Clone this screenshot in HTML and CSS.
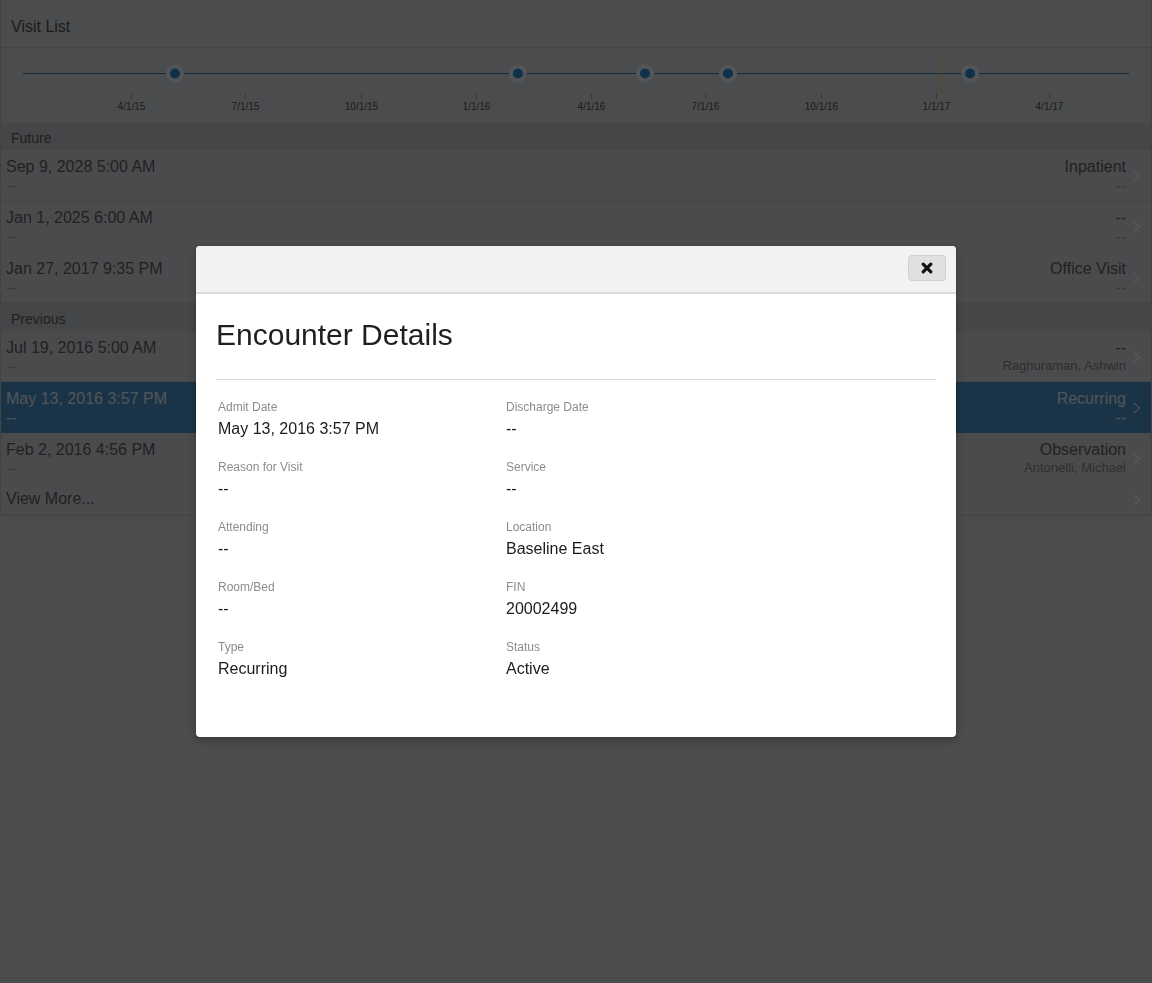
FILE: index.html
```html
<!DOCTYPE html>
<html lang="en">
<head>
<meta charset="utf-8">
<title>Visit List</title>
<link rel="stylesheet" href="styles.css">
</head>
<body>
<div class="panel">
  <div class="panel-header">Visit List</div>
  <div class="timeline">
    <svg class="timeline-svg" width="1150" height="75" viewBox="0 0 1150 75">
      <line class="tl-line" x1="22" y1="25.5" x2="1128" y2="25.5"/>
      <g class="ticks">
        <line x1="130.5" y1="46" x2="130.5" y2="51"/>
        <line x1="244.5" y1="46" x2="244.5" y2="51"/>
        <line x1="360.5" y1="46" x2="360.5" y2="51"/>
        <line x1="475.5" y1="46" x2="475.5" y2="51"/>
        <line x1="590.5" y1="46" x2="590.5" y2="51"/>
        <line x1="704.5" y1="46" x2="704.5" y2="51"/>
        <line x1="820.5" y1="46" x2="820.5" y2="51"/>
        <line x1="935.5" y1="46" x2="935.5" y2="51"/>
        <line x1="1048.5" y1="46" x2="1048.5" y2="51"/>
      </g>
      <g class="tick-labels">
        <text x="130.5" y="62">4/1/15</text>
        <text x="244.5" y="62">7/1/15</text>
        <text x="360.5" y="62">10/1/15</text>
        <text x="475.5" y="62">1/1/16</text>
        <text x="590.5" y="62">4/1/16</text>
        <text x="704.5" y="62">7/1/16</text>
        <text x="820.5" y="62">10/1/16</text>
        <text x="935.5" y="62">1/1/17</text>
        <text x="1048.5" y="62">4/1/17</text>
      </g>
      <line class="today" x1="940.5" y1="4" x2="940.5" y2="45"/>
      <g class="dots">
        <circle class="halo" cx="174" cy="25.5" r="9"/><circle class="dot" cx="174" cy="25.5" r="5"/>
        <circle class="halo" cx="517" cy="25.5" r="9"/><circle class="dot" cx="517" cy="25.5" r="5"/>
        <circle class="halo" cx="644" cy="25.5" r="9"/><circle class="dot" cx="644" cy="25.5" r="5"/>
        <circle class="halo" cx="727" cy="25.5" r="9"/><circle class="dot" cx="727" cy="25.5" r="5"/>
        <circle class="halo" cx="969" cy="25.5" r="9"/><circle class="dot" cx="969" cy="25.5" r="5"/>
      </g>
    </svg>
  </div>

  <div class="section-header">Future</div>
  <div class="row">
    <div class="row-left"><div class="row-title">Sep 9, 2028 5:00 AM</div><div class="row-sub">--</div></div>
    <div class="row-right"><div class="row-title">Inpatient</div><div class="row-sub">--</div></div>
    <svg class="chev" width="8" height="12" viewBox="0 0 8 12"><path d="M1 1 L6.5 6 L1 11"/></svg>
  </div>
  <div class="row">
    <div class="row-left"><div class="row-title">Jan 1, 2025 6:00 AM</div><div class="row-sub">--</div></div>
    <div class="row-right"><div class="row-title">--</div><div class="row-sub">--</div></div>
    <svg class="chev" width="8" height="12" viewBox="0 0 8 12"><path d="M1 1 L6.5 6 L1 11"/></svg>
  </div>
  <div class="row">
    <div class="row-left"><div class="row-title">Jan 27, 2017 9:35 PM</div><div class="row-sub">--</div></div>
    <div class="row-right"><div class="row-title">Office Visit</div><div class="row-sub">--</div></div>
    <svg class="chev" width="8" height="12" viewBox="0 0 8 12"><path d="M1 1 L6.5 6 L1 11"/></svg>
  </div>

  <div class="section-header section-header-prev">Previous</div>
  <div class="row">
    <div class="row-left"><div class="row-title">Jul 19, 2016 5:00 AM</div><div class="row-sub">--</div></div>
    <div class="row-right"><div class="row-title">--</div><div class="row-sub row-person">Raghuraman, Ashwin</div></div>
    <svg class="chev" width="8" height="12" viewBox="0 0 8 12"><path d="M1 1 L6.5 6 L1 11"/></svg>
  </div>
  <div class="row row-selected">
    <div class="row-left"><div class="row-title">May 13, 2016 3:57 PM</div><div class="row-sub">--</div></div>
    <div class="row-right"><div class="row-title">Recurring</div><div class="row-sub">--</div></div>
    <svg class="chev" width="8" height="12" viewBox="0 0 8 12"><path d="M1 1 L6.5 6 L1 11"/></svg>
  </div>
  <div class="row">
    <div class="row-left"><div class="row-title">Feb 2, 2016 4:56 PM</div><div class="row-sub">--</div></div>
    <div class="row-right"><div class="row-title">Observation</div><div class="row-sub row-person">Antonelli, Michael</div></div>
    <svg class="chev" width="8" height="12" viewBox="0 0 8 12"><path d="M1 1 L6.5 6 L1 11"/></svg>
  </div>
  <div class="row row-more">
    <div class="row-left"><div class="row-title">View More...</div></div>
    <svg class="chev" width="8" height="12" viewBox="0 0 8 12"><path d="M1 1 L6.5 6 L1 11"/></svg>
  </div>
</div>

<div class="backdrop"></div>

<div class="modal-wrap">
  <div class="modal">
    <div class="modal-header">
      <button class="close-btn" type="button" aria-label="Close">
        <svg width="12" height="12" viewBox="0 0 12 12"><path d="M2.2 2.2 L9.8 9.8 M9.8 2.2 L2.2 9.8"/></svg>
      </button>
    </div>
    <div class="modal-body">
      <h1 class="modal-title">Encounter Details</h1>
      <hr class="modal-rule">
      <div class="details">
        <div class="field"><div class="field-label">Admit Date</div><div class="field-value">May 13, 2016 3:57 PM</div></div>
        <div class="field"><div class="field-label">Discharge Date</div><div class="field-value">--</div></div>
        <div class="field"><div class="field-label">Reason for Visit</div><div class="field-value">--</div></div>
        <div class="field"><div class="field-label">Service</div><div class="field-value">--</div></div>
        <div class="field"><div class="field-label">Attending</div><div class="field-value">--</div></div>
        <div class="field"><div class="field-label">Location</div><div class="field-value">Baseline East</div></div>
        <div class="field"><div class="field-label">Room/Bed</div><div class="field-value">--</div></div>
        <div class="field"><div class="field-label">FIN</div><div class="field-value">20002499</div></div>
        <div class="field"><div class="field-label">Type</div><div class="field-value">Recurring</div></div>
        <div class="field"><div class="field-label">Status</div><div class="field-value">Active</div></div>
      </div>
    </div>
  </div>
</div>
</body>
</html>
```

FILE: styles.css
```css
* { box-sizing: border-box; }

html, body {
  margin: 0;
  padding: 0;
  height: 100%;
}

body {
  font-family: "Liberation Sans", Arial, Helvetica, sans-serif;
  background: #cccdd1;
  color: #555;
}

.panel {
  border: 1px solid #b3b5ba;
  border-top-color: #c2c3c7;
  background: #cccdd1;
}

.panel-header {
  height: 47px;
  display: flex;
  align-items: center;
  padding: 5px 0 0 10px;
  font-size: 16px;
  color: #505052;
  border-bottom: 1px solid #b8babe;
}

.timeline {
  height: 75px;
}

.timeline-svg { display: block; }

.tl-line { stroke: #2f72a3; stroke-width: 1; }
.ticks line { stroke: #8f9094; stroke-width: 1; }
.tick-labels text {
  font-family: "Liberation Sans", Arial, sans-serif;
  font-size: 10px;
  fill: #4e4e50;
  text-anchor: middle;
}
.today { stroke: #f2c23a; stroke-width: 1; }
.halo { fill: #e2e9f1; }
.dot { fill: #2a86c8; }

.section-header {
  height: 27px;
  display: flex;
  align-items: center;
  padding: 3px 0 0 10px;
  font-size: 14px;
  color: #545558;
  background: #bcbec4;
}

.section-header-prev { height: 28px; padding-top: 4px; }

.row {
  height: 51px;
  display: flex;
  align-items: flex-start;
  padding: 7px 10px 0 5px;
  border-bottom: 1px solid #bdbfc3;
  background: #cbccd0;
}

.row-left { flex: 1; }

.row-right {
  text-align: right;
}

.row-title {
  font-size: 16px;
  line-height: 20px;
  color: #5a5a5c;
}

.row-sub {
  font-size: 16px;
  line-height: 17px;
  color: #9a9b9d;
}

.row-person {
  font-size: 13px;
  line-height: 16px;
  color: #7c7d80;
}

.chev {
  align-self: center;
  margin-left: 7px;
  margin-top: -6px;
  flex: none;
}

.chev path {
  fill: none;
  stroke: #eeeff1;
  stroke-width: 1.1;
}

.row-selected {
  background: #478cbf;
  border-bottom-color: #478cbf;
}

.row-selected .row-title,
.row-selected .row-sub { color: #dce6ef; }

.row-selected .chev path { stroke: #c9dcec; }

.row-more {
  height: 31px;
  padding-top: 5px;
  border-bottom: none;
}

.row-more .chev { margin-top: -5px; }

.backdrop {
  position: fixed;
  inset: 0;
  background: rgba(0, 0, 0, 0.63);
}

.modal-wrap {
  position: fixed;
  inset: 0;
  display: flex;
  justify-content: center;
  align-items: flex-start;
  padding-top: 246px;
}

.modal {
  width: 760px;
  background: #ffffff;
  border-radius: 4px;
  overflow: hidden;
  box-shadow: 0 3px 9px rgba(0, 0, 0, 0.3);
}

.modal-header {
  height: 48px;
  background: #f2f2f2;
  border-bottom: 2px solid #dcdcdc;
  display: flex;
  justify-content: flex-end;
  align-items: flex-start;
  padding: 9px 10px 0 0;
}

.close-btn {
  width: 38px;
  height: 26px;
  padding: 0;
  margin: 0;
  border: 1px solid #cfcfcf;
  border-radius: 4px;
  background: #e0e0e0;
  display: flex;
  align-items: center;
  justify-content: center;
  cursor: pointer;
}

.close-btn path {
  fill: none;
  stroke: #111;
  stroke-width: 3.2;
  stroke-linecap: round;
}

.modal-body {
  padding: 25px 20px 58px 20px;
}

.modal-title {
  margin: 0;
  font-size: 30px;
  line-height: 31px;
  font-weight: normal;
  color: #1f1f1f;
}

.modal-rule {
  margin: 29px 0 0 0;
  border: none;
  border-top: 1px solid #d9d9d9;
  height: 0;
}

.details {
  margin-top: 20px;
  padding-left: 2px;
  display: grid;
  grid-template-columns: 288px 288px;
  row-gap: 21px;
}

.field-label {
  font-size: 12px;
  line-height: 15px;
  color: #8c8c8c;
}

.field-value {
  margin-top: 4px;
  font-size: 16px;
  line-height: 20px;
  color: #1c1c1c;
}
```
